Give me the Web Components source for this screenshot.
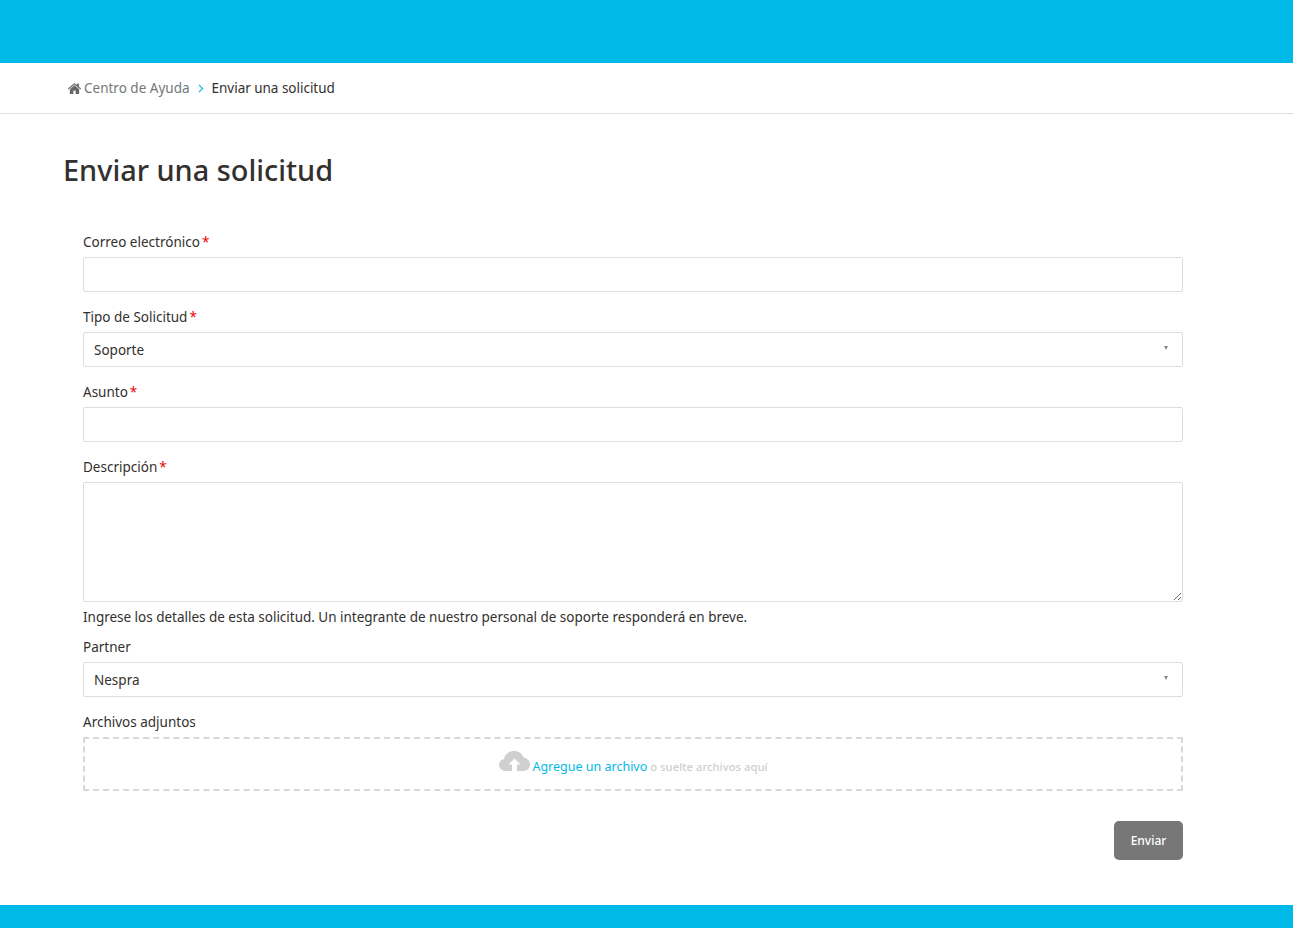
<!DOCTYPE html>
<html lang="es">
<head>
<meta charset="utf-8">
<title>Enviar una solicitud</title>
<style>
    html, body { margin: 0; padding: 0; background: #fff; }
    body { font-family: "Noto Sans", "Open Sans", sans-serif; font-size: 13.5px; color: #33302e; }
</style>
</head>
<body>
<site-band height="63"></site-band>
<crumb-bar current="Enviar una solicitud" parent="Centro de Ayuda"></crumb-bar>
<request-page heading="Enviar una solicitud">
    <form-field label="Correo electrónico" required><text-box></text-box></form-field>
    <form-field label="Tipo de Solicitud" required><select-box value="Soporte"></select-box></form-field>
    <form-field label="Asunto" required><text-box></text-box></form-field>
    <form-field label="Descripción" required hint="Ingrese los detalles de esta solicitud. Un integrante de nuestro personal de soporte responderá en breve."><text-box multiline></text-box></form-field>
    <form-field label="Partner"><select-box value="Nespra"></select-box></form-field>
    <form-field label="Archivos adjuntos"><drop-zone></drop-zone></form-field>
    <submit-row label="Enviar"></submit-row>
</request-page>
<site-band height="23"></site-band>

<script>
class SiteBand extends HTMLElement {
    connectedCallback() {
        this.attachShadow({ mode: 'open' });
        this.shadowRoot.innerHTML = `
            <style>
                :host { display: block; background: #00b9e7; height: ${this.getAttribute('height')}px; }
            </style>
        `;
    }
}

class CrumbBar extends HTMLElement {
    connectedCallback() {
        this.attachShadow({ mode: 'open' });
        this.shadowRoot.innerHTML = `
            <style>
                :host { display: block; border-bottom: 1px solid #ddd; }
                nav {
                    display: flex;
                    align-items: center;
                    height: 50px;
                    padding-left: 68px;
                    font-size: 13.5px;
                    box-sizing: border-box;
                }
                svg { display: block; }
                .home { width: 13px; height: 11px; margin: 0 3px 0 0; fill: #666; stroke: #666; stroke-width: .3; }
                .parent { color: #72777a; }
                .sep { width: 6px; height: 9px; margin: 0 8px; fill: none; stroke: #00b9e7; stroke-width: 1.1; }
                .current { color: #33302e; letter-spacing: -0.02px; }
            </style>
            <nav>
                <svg class="home" viewBox="0 0 13 11"><path d="M0 5.600 6.500.3 9 2.300V.8h1.800v3L13 5.600l-.6.7-5.900-4.800L.6 6.300z"/><path d="M2 6.200 6.500 2.600 11 6.200V11H7.800V7.600H5.200V11H2z"/></svg>
                <span class="parent">${this.getAttribute('parent')}</span>
                <svg class="sep" viewBox="0 0 6 9"><path d="M1 .8 4.600 4.500 1 8.200"/></svg>
                <span class="current">${this.getAttribute('current')}</span>
            </nav>
        `;
    }
}

class RequestPage extends HTMLElement {
    connectedCallback() {
        this.attachShadow({ mode: 'open' });
        this.shadowRoot.innerHTML = `
            <style>
                :host { display: block; height: 791px; box-sizing: border-box; padding: 0 110px 0 63px; }
                h1 {
                    margin: 0;
                    padding-top: 37px;
                    height: 51px;
                    font-size: 28.9px;
                    line-height: 38px;
                    font-weight: 500;
                    color: #33302e;
                }
                .form {
                    display: flex;
                    flex-direction: column;
                    gap: 15px;
                    padding: 30px 0 0 20px;
                }
            </style>
            <h1>${this.getAttribute('heading')}</h1>
            <div class="form"><slot></slot></div>
        `;
    }
}

class FormField extends HTMLElement {
    connectedCallback() {
        const hint = this.getAttribute('hint');
        this.attachShadow({ mode: 'open' });
        this.shadowRoot.innerHTML = `
            <style>
                :host { display: block; }
                label { display: block; height: 25px; line-height: 20px; color: #33302e; }
                i { font-style: normal; color: #e00; margin-left: 2px; }
                .hint { line-height: 20px; height: 20px; margin-top: 5px; margin-bottom: -5px; letter-spacing: -0.015px; }
            </style>
            <label>${this.getAttribute('label')}${this.hasAttribute('required') ? '<i>*</i>' : ''}</label>
            <slot></slot>
            ${hint ? `<div class="hint">${hint}</div>` : ''}
        `;
    }
}

class TextBox extends HTMLElement {
    connectedCallback() {
        const multi = this.hasAttribute('multiline');
        this.attachShadow({ mode: 'open' });
        this.shadowRoot.innerHTML = `
            <style>
                :host { display: block; }
                input, textarea {
                    display: block;
                    box-sizing: border-box;
                    width: 100%;
                    margin: 0;
                    background: #fff;
                    border: 1px solid #ddd;
                    border-radius: 2px;
                    outline: none;
                    font: inherit;
                }
                input { height: 35px; }
                textarea { height: 120px; resize: vertical; }
            </style>
            ${multi ? '<textarea></textarea>' : '<input type="text">'}
        `;
    }
}

class SelectBox extends HTMLElement {
    connectedCallback() {
        this.attachShadow({ mode: 'open' });
        this.shadowRoot.innerHTML = `
            <style>
                :host {
                    display: flex;
                    align-items: center;
                    justify-content: space-between;
                    box-sizing: border-box;
                    height: 35px;
                    padding: 0 14px 0 10px;
                    border: 1px solid #ddd;
                    border-radius: 2px;
                    background: #fff;
                }
                .arrow {
                    width: 0;
                    height: 0;
                    border-left: 2.5px solid transparent;
                    border-right: 2.5px solid transparent;
                    border-top: 4px solid #888;
                    margin-bottom: 4px;
                }
            </style>
            <span>${this.getAttribute('value')}</span>
            <span class="arrow"></span>
        `;
    }
}

class DropZone extends HTMLElement {
    connectedCallback() {
        this.attachShadow({ mode: 'open' });
        this.shadowRoot.innerHTML = `
            <style>
                :host {
                    display: flex;
                    align-items: flex-end;
                    justify-content: center;
                    box-sizing: border-box;
                    height: 54px;
                    padding-bottom: 13px;
                    border: 2px dashed #d8d8d8;
                    border-radius: 2px;
                }
                svg { width: 31px; height: 22px; fill: #cfcfcf; margin: 0 2px 4px 1px; }
                a { color: #00b9e7; font-size: 12.5px; line-height: 18px; }
                span { color: #cfcfcf; font-size: 11.300px; font-weight: 500; line-height: 18px; margin-left: 3px; }
            </style>
            <svg viewBox="0 0 31 22"><path fill-rule="evenodd" d="M7 21C3 21 0 18.400 0 15c0-3 2-5.300 5-6C5.800 4.200 10 1 15 1c4.600 0 8.300 2.400 9.500 6.500C28 8 31 10.800 31 14.500 31 18.200 28 21 24 21zM15.500 8.500 9.500 14.500H13V21H18V14.500H21.500z"/></svg>
            <a>Agregue un archivo</a><span>o suelte archivos aquí</span>
        `;
    }
}

class SubmitRow extends HTMLElement {
    connectedCallback() {
        this.attachShadow({ mode: 'open' });
        this.shadowRoot.innerHTML = `
            <style>
                :host { display: flex; justify-content: flex-end; padding-top: 15px; }
                button {
                    width: 69px;
                    height: 39px;
                    padding: 0;
                    border: 0;
                    border-radius: 5px;
                    background: #777;
                    color: #fff;
                    font: 500 12px "Noto Sans", sans-serif;
                }
            </style>
            <button type="button">${this.getAttribute('label')}</button>
        `;
    }
}

customElements.define('site-band', SiteBand);
customElements.define('crumb-bar', CrumbBar);
customElements.define('request-page', RequestPage);
customElements.define('form-field', FormField);
customElements.define('text-box', TextBox);
customElements.define('select-box', SelectBox);
customElements.define('drop-zone', DropZone);
customElements.define('submit-row', SubmitRow);
</script>
</body>
</html>
